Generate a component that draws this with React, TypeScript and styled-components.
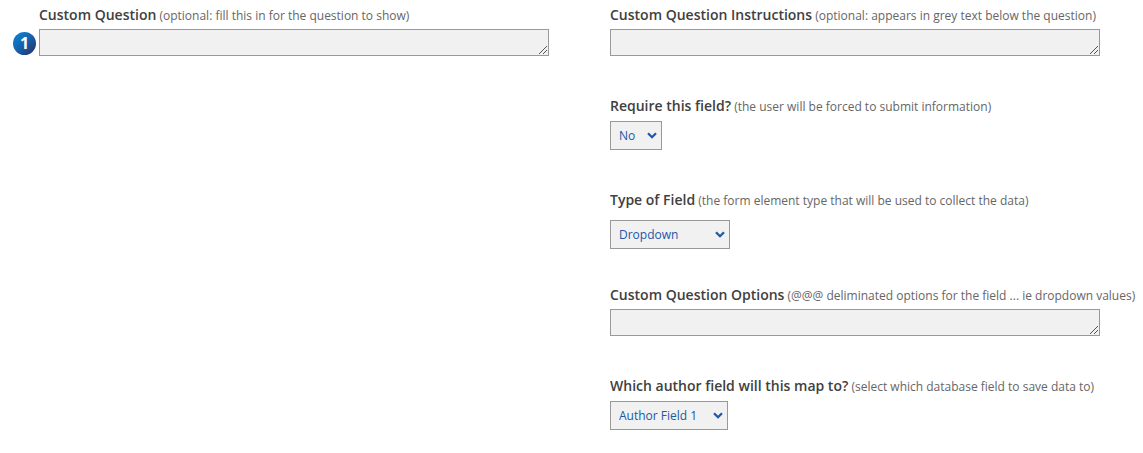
import React from 'react';
import styled, { createGlobalStyle } from 'styled-components';

const Global = createGlobalStyle`
  *, *::before, *::after { box-sizing: border-box; }
  body { margin: 0; background: #fff; color: #404040; font-family: "Open Sans", sans-serif; }
`;

const Form = styled.form`
  display: grid;
  grid-template-columns: 1fr 533px;
  padding-top: 5px;
`;

const Question = styled.section`
  display: grid;
  grid-template-columns: 23px minmax(0, 510px);
  column-gap: 3px;
  align-items: start;
  align-content: start;
  padding: 0 61px 0 13px;
`;

const Settings = styled.section`
  display: flex;
  flex-direction: column;
`;

const Field = styled.div<{ $space?: number }>`
  display: flex;
  flex-direction: column;
  align-items: flex-start;
  padding-bottom: ${p => p.$space ?? 0}px;
`;

const Label = styled.label<{ $gap?: number }>`
  font-size: 14px;
  font-weight: 600;
  line-height: 20px;
  white-space: nowrap;
  margin-bottom: ${p => p.$gap ?? 4}px;
`;

const Hint = styled.span`
  font-size: 12px;
  font-weight: 400;
  line-height: 16px;
  color: #666;
`;

const resizeGrip = `url("data:image/svg+xml,%3Csvg xmlns='http://www.w3.org/2000/svg' width='15' height='15' fill='none' stroke='%23555'%3E%3Cpath d='M6 14l8-8M10 14l4-4'/%3E%3C/svg%3E")`;

const TextArea = styled.textarea`
  display: block;
  width: 100%;
  height: 27px;
  padding: 2px 8px;
  border: 1px solid #999;
  border-radius: 0;
  background: #f1f1f1;
  color: #2058a8;
  font: 12px/20px "Open Sans", sans-serif;
  resize: both;
  overflow: hidden;

  &::-webkit-resizer {
    background: ${resizeGrip} no-repeat right bottom;
  }
`;

const OptionArea = styled(TextArea)`
  width: calc(100% - 43px);
`;

const SelectBox = styled.span<{ $width: number }>`
  display: grid;
  align-items: center;
  width: ${p => p.$width}px;
  height: 29px;

  > * { grid-area: 1 / 1; }
  > svg { justify-self: end; margin-right: 5px; pointer-events: none; }
`;

const NativeSelect = styled.select`
  appearance: none;
  width: 100%;
  height: 100%;
  padding: 0 8px;
  border: 1px solid #999;
  border-radius: 0;
  background: #f1f1f1;
  color: #2058a8;
  font: 12px "Open Sans", sans-serif;
`;

const Badge = styled.span`
  display: grid;
  place-items: center;
  width: 23px;
  height: 23px;
  margin-top: 27px;
  padding-bottom: 2px;
  border-radius: 50%;
  background: linear-gradient(135deg, #0f78c8 20%, #1461ac 50%, #25366f 90%);
  color: #fff;
  font-size: 16px;
  font-weight: 700;
  line-height: 20px;
`;

function Select({ id, width, options }: { id: string; width: number; options: string[] }) {
  return (
    <SelectBox $width={width}>
      <NativeSelect id={id}>
        {options.map(option => <option key={option}>{option}</option>)}
      </NativeSelect>
      <svg width="10" height="7" viewBox="0 0 10 7" fill="none" stroke="#2058a8" strokeWidth="2.3" aria-hidden="true">
        <path d="M1 1.2 5 5.2 9 1.2" />
      </svg>
    </SelectBox>
  );
}

export default function App() {
  return (
    <>
      <Global />
      <Form>
        <Question>
          <Badge>1</Badge>
          <Field>
            <Label htmlFor="question">Custom Question<Hint> (optional: fill this in for the question to show)</Hint></Label>
            <TextArea id="question" />
          </Field>
        </Question>
        <Settings>
          <Field $space={40}>
            <Label htmlFor="instructions">Custom Question Instructions<Hint> (optional: appears in grey text below the question)</Hint></Label>
            <OptionArea id="instructions" />
          </Field>
          <Field $space={40}>
            <Label htmlFor="required" $gap={5}>Require this field?<Hint> (the user will be forced to submit information)</Hint></Label>
            <Select id="required" width={52} options={['No', 'Yes']} />
          </Field>
          <Field $space={36}>
            <Label htmlFor="type" $gap={10}>Type of Field<Hint> (the form element type that will be used to collect the data)</Hint></Label>
            <Select id="type" width={120} options={['Dropdown', 'Text']} />
          </Field>
          <Field $space={40}>
            <Label htmlFor="options">Custom Question Options<Hint> (@@@ deliminated options for the field ... ie dropdown values)</Hint></Label>
            <OptionArea id="options" />
          </Field>
          <Field>
            <Label htmlFor="author" $gap={5}>Which author field will this map to?<Hint> (select which database field to save data to)</Hint></Label>
            <Select id="author" width={118} options={['Author Field 1', 'Author Field 2']} />
          </Field>
        </Settings>
      </Form>
    </>
  );
}
